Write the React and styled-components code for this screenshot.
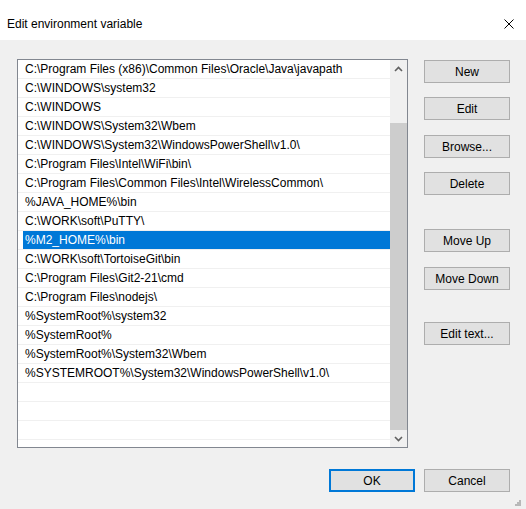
import React from "react";
import styled, { createGlobalStyle } from "styled-components";

const GlobalStyle = createGlobalStyle`
  html, body {
    margin: 0;
    padding: 0;
    background: #f0f0f0;
  }
  body {
    font-family: "Liberation Sans", Arial, sans-serif;
    color: #000;
  }
`;

const Window = styled.div`
  width: 526px;
  height: 509px;
  display: flex;
  flex-direction: column;
  background: #f0f0f0;
  position: relative;
  overflow: hidden;
`;

const TitleBar = styled.div`
  height: 40px;
  background: #fff;
  display: flex;
  align-items: center;
  justify-content: space-between;
  padding: 8px 12px 0 7px;
  box-sizing: border-box;
  font-size: 12px;
`;

const Close = styled.svg`
  width: 10px;
  height: 10px;
`;

const Body = styled.div`
  display: flex;
  padding: 19px 0 0 17px;
`;

const ListBox = styled.div`
  width: 391px;
  height: 389px;
  box-sizing: border-box;
  border: 1px solid #828790;
  background: #fff;
  display: flex;
`;

const Rows = styled.div`
  flex: 1;
  overflow: hidden;
`;

const Row = styled.div`
  height: 18px;
  border-bottom: 1px solid #f0f0f0;
  padding-left: 5px;
  display: flex;
  align-items: stretch;
`;

const RowText = styled.div`
  flex: 1;
  display: flex;
  align-items: center;
  padding-left: 2px;
  font-size: 12px;
  white-space: nowrap;
  background: ${(p) => (p.$selected ? "#0078d7" : "transparent")};
  color: ${(p) => (p.$selected ? "#fff" : "#000")};
`;

const ScrollBar = styled.div`
  width: 17px;
  background: #f0f0f0;
  display: flex;
  flex-direction: column;
`;

const ArrowBox = styled.div`
  height: 17px;
  display: flex;
  align-items: center;
  justify-content: center;
`;

const Track = styled.div`
  flex: 1;
  display: flex;
  flex-direction: column;
  justify-content: flex-end;
`;

const Thumb = styled.div`
  height: 307px;
  background: #cdcdcd;
`;

const Buttons = styled.div`
  display: flex;
  flex-direction: column;
  margin-left: 16px;
  padding-top: 1px;
`;

const Button = styled.div`
  width: 86px;
  height: 23px;
  box-sizing: border-box;
  border: ${(p) => (p.$default ? "2px solid #0078d7" : "1px solid #adadad")};
  background: #e1e1e1;
  display: flex;
  align-items: center;
  justify-content: center;
  font-size: 12px;
  margin-top: ${(p) => p.$gap || 0}px;
`;

const Footer = styled.div`
  display: flex;
  justify-content: flex-end;
  gap: 9px;
  padding: 21px 16px 0 0;
`;

const Grip = styled.svg`
  position: absolute;
  right: 5px;
  bottom: 3px;
  width: 8px;
  height: 8px;
`;

const entries = [
  "C:\\Program Files (x86)\\Common Files\\Oracle\\Java\\javapath",
  "C:\\WINDOWS\\system32",
  "C:\\WINDOWS",
  "C:\\WINDOWS\\System32\\Wbem",
  "C:\\WINDOWS\\System32\\WindowsPowerShell\\v1.0\\",
  "C:\\Program Files\\Intel\\WiFi\\bin\\",
  "C:\\Program Files\\Common Files\\Intel\\WirelessCommon\\",
  "%JAVA_HOME%\\bin",
  "C:\\WORK\\soft\\PuTTY\\",
  "%M2_HOME%\\bin",
  "C:\\WORK\\soft\\TortoiseGit\\bin",
  "C:\\Program Files\\Git2-21\\cmd",
  "C:\\Program Files\\nodejs\\",
  "%SystemRoot%\\system32",
  "%SystemRoot%",
  "%SystemRoot%\\System32\\Wbem",
  "%SYSTEMROOT%\\System32\\WindowsPowerShell\\v1.0\\",
  "",
  "",
  "",
  "",
];

const sideButtons = [
  { label: "New", gap: 0 },
  { label: "Edit", gap: 14 },
  { label: "Browse...", gap: 15 },
  { label: "Delete", gap: 14 },
  { label: "Move Up", gap: 34 },
  { label: "Move Down", gap: 15 },
  { label: "Edit text...", gap: 32 },
];

export default function App() {
  return (
    <Window>
      <GlobalStyle />
      <TitleBar>
        <span>Edit environment variable</span>
        <Close viewBox="0 0 10 10">
          <path d="M0.5 0.5 L9.5 9.5 M9.5 0.5 L0.5 9.5" stroke="#000" strokeWidth="1" fill="none" />
        </Close>
      </TitleBar>

      <Body>
        <ListBox>
          <Rows>
            {entries.map((e, i) => (
              <Row key={i}>
                <RowText $selected={i === 9}>{e}</RowText>
              </Row>
            ))}
          </Rows>
          <ScrollBar>
            <ArrowBox>
              <svg width="9" height="6" viewBox="0 0 9 6">
                <path d="M1 5 L4.5 1.5 L8 5" stroke="#606060" strokeWidth="1.6" fill="none" />
              </svg>
            </ArrowBox>
            <Track>
              <Thumb />
            </Track>
            <ArrowBox>
              <svg width="9" height="6" viewBox="0 0 9 6">
                <path d="M1 1 L4.5 4.5 L8 1" stroke="#606060" strokeWidth="1.6" fill="none" />
              </svg>
            </ArrowBox>
          </ScrollBar>
        </ListBox>

        <Buttons>
          {sideButtons.map((b) => (
            <Button key={b.label} $gap={b.gap}>
              {b.label}
            </Button>
          ))}
        </Buttons>
      </Body>

      <Footer>
        <Button $default>OK</Button>
        <Button>Cancel</Button>
      </Footer>

      <Grip viewBox="0 0 8 8">
        {[
          [6, 0],
          [4, 2],
          [6, 2],
          [2, 4],
          [4, 4],
          [6, 4],
        ].map(([x, y], i) => (
          <rect key={i} x={x} y={y + 2} width="2" height="2" fill="#b8b8b8" />
        ))}
      </Grip>
    </Window>
  );
}
